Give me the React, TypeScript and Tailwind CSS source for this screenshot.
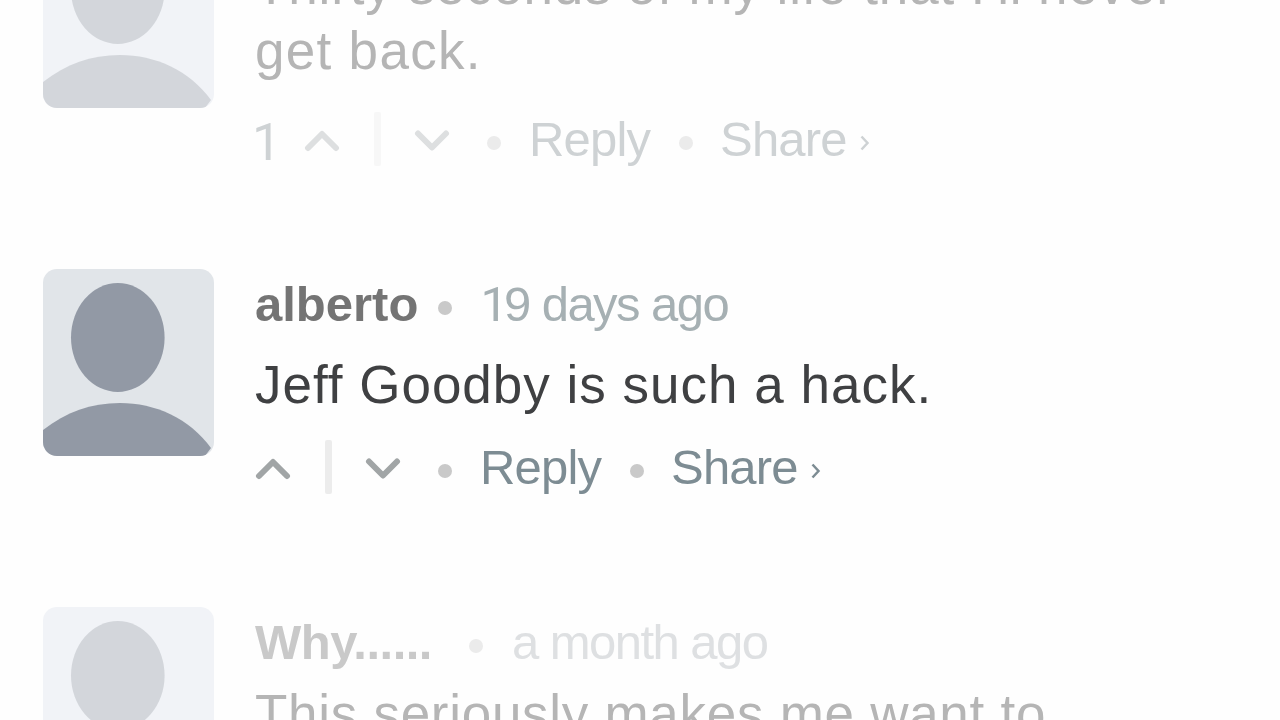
import React from 'react';

interface Line {
    text: string;
    tracking: string;
}

interface Comment {
    author?: string;
    time?: React.ReactNode;
    body: Line[];
    votes?: number;
    active?: boolean;
    className: string;
    headerClass: string;
    actionsClass: string;
}

const comments: Comment[] = [
    {
        body: [
            { text: "Thirty seconds of my life that I'll never", tracking: 'tracking-[0.85px]' },
            { text: 'get back.', tracking: 'tracking-[1.3px]' },
        ],
        votes: 1,
        className: 'h-[348px] pt-[32px]',
        headerClass: '',
        actionsClass: 'mt-[26px]',
    },
    {
        author: 'alberto',
        time: (
            <>
                <span className="font-[Roboto] tracking-[-4px]">1</span>9 days ago
            </>
        ),
        body: [{ text: 'Jeff Goodby is such a hack.', tracking: 'tracking-[1px]' }],
        active: true,
        className: 'h-[338px] pt-[5px]',
        headerClass: 'mb-[18px]',
        actionsClass: 'mt-[20px]',
    },
    {
        author: 'Why......',
        time: 'a month ago',
        body: [{ text: 'This seriously makes me want to', tracking: 'tracking-[0.72px]' }],
        className: 'h-[338px] pt-[5px]',
        headerClass: 'mb-[9px]',
        actionsClass: 'mt-[20px]',
    },
];

const Avatar: React.FC<{ active?: boolean }> = ({ active }) => (
    <svg
        viewBox="0 0 171 187"
        className={`h-[187px] w-[171px] shrink-0 rounded-[14px] ${active ? 'bg-[#e1e5e9] text-[#9299a5]' : 'bg-[#f1f3f7] text-[#d3d6db]'}`}
        fill="currentColor"
    >
        <ellipse cx="74.8" cy="68.5" rx="46.8" ry="54.5" />
        <path d="M0 161C23 143 48 134 77 134C112 134 146 149 168 179L162 187H0Z" />
    </svg>
);

const Dot: React.FC<{ active?: boolean; className: string }> = ({ active, className }) => (
    <span className={`size-[14px] shrink-0 rounded-full ${active ? 'bg-[#c9c9c9]' : 'bg-[#ebebeb]'} ${className}`} />
);

const Arrow: React.FC<{ down?: boolean; active?: boolean }> = ({ down, active }) => (
    <svg
        viewBox="0 0 36 24"
        className={`mt-[3px] h-[24px] w-[36px] shrink-0 ${active ? 'text-[#a1a5a6]' : 'text-[#dddfe0]'}`}
        fill="none"
        stroke="currentColor"
        strokeWidth="6"
        strokeLinecap="round"
        strokeLinejoin="round"
    >
        <path d={down ? 'M4 4.5L18 18.5L32 4.5' : 'M4 19L18 5L32 19'} />
    </svg>
);

const Actions: React.FC<{ comment: Comment }> = ({ comment: { votes, active, actionsClass } }) => (
    <div
        className={`flex h-[60px] items-center text-[49px] leading-[60px] tracking-[-0.8px] ${active ? 'text-[#7d8c93]' : 'text-[#ced2d4]'} ${actionsClass}`}
    >
        {votes && <span className="-ml-[3px] w-[52px] pt-[7px] font-[Roboto] text-[52px]">{votes}</span>}
        <Arrow active={active} />
        <span className={`ml-[34px] mr-[33px] h-[54px] w-[7px] rounded-[2px] ${active ? 'bg-[#ececec]' : 'bg-[#f7f7f7]'}`} />
        <Arrow down active={active} />
        <Dot active={active} className="ml-[37px] mr-[28px] mt-[8px]" />
        <span className="w-[150px]">Reply</span>
        <Dot active={active} className="mr-[27px] mt-[8px]" />
        <span className="w-[140px]">Share</span>
        <svg viewBox="0 0 10 16" className="mt-[8px] h-[16px] w-[10px]" fill="none" stroke="currentColor" strokeWidth="2.5">
            <path d="M1.5 1.5L7.5 8L1.5 14.5" />
        </svg>
    </div>
);

const CommentItem: React.FC<{ comment: Comment }> = ({ comment }) => {
    const { author, time, body, active, className, headerClass } = comment;

    return (
        <li className={`flex gap-[41px] ${className}`}>
            <div className={author ? '-mt-[5px]' : '-mt-[32px]'}>
                <Avatar active={active} />
            </div>
            <div className="whitespace-nowrap">
                {author && (
                    <div className={`flex h-[60px] items-center text-[49px] leading-[60px] ${headerClass}`}>
                        <span className={`font-bold ${active ? 'text-[#747474]' : 'tracking-[-0.5px] text-[#c9c9c9]'}`}>{author}</span>
                        <Dot active={active} className={active ? 'ml-[20px] mr-[28px] mt-[7px]' : 'ml-[37px] mr-[29px] mt-[7px]'} />
                        <span className={active ? 'tracking-[-1.55px] text-[#a6b0b3]' : 'tracking-[-1.55px] text-[#dee0e2]'}>{time}</span>
                    </div>
                )}
                <div className={`text-[53px] leading-[65px] ${active ? 'text-[#3f4042]' : 'text-[#b5b5b5]'}`}>
                    {body.map(({ text, tracking }) => (
                        <p key={text} className={tracking}>{text}</p>
                    ))}
                </div>
                <Actions comment={comment} />
            </div>
        </li>
    );
};

const App: React.FC = () => {
    return (
        <main className="h-screen overflow-hidden bg-[#fefefe] font-['Liberation_Sans',sans-serif]">
            <ul className="-mt-[79px] flex flex-col pl-[43px]">
                {comments.map((comment) => (
                    <CommentItem key={comment.body[0].text} comment={comment} />
                ))}
            </ul>
        </main>
    );
};

export default App;
